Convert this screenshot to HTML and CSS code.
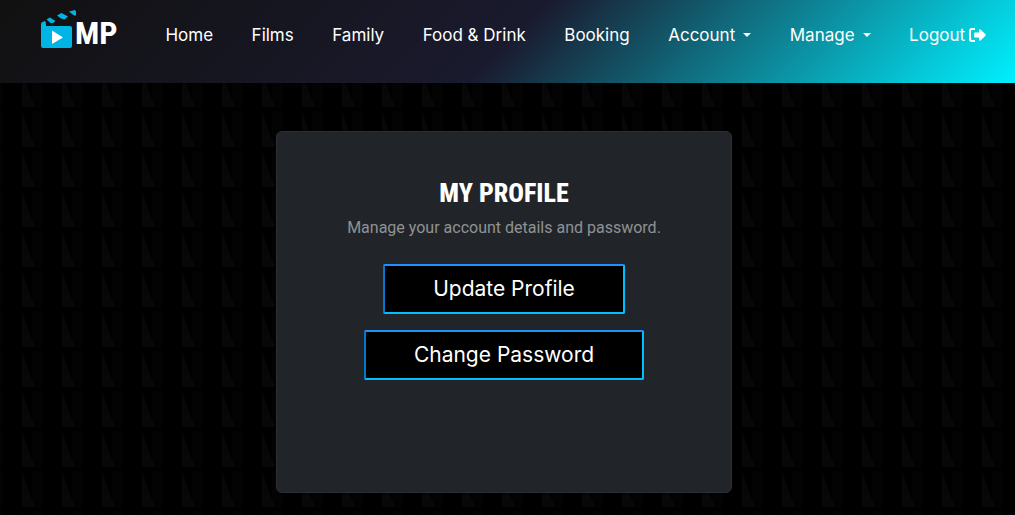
FILE: index.html
```html
<!DOCTYPE html>
<html lang="en">
<head>
<meta charset="utf-8">
<meta name="viewport" content="width=device-width, initial-scale=1">
<title>My Profile</title>
<link rel="stylesheet" href="styles.css">
</head>
<body>
<header class="site-header">
  <a class="brand" href="#" aria-label="MP home">
    <svg class="brand-icon" viewBox="0 0 36 39" aria-hidden="true">
      <path fill="#00b4e6" d="M0 14q0-2 2-2h2q1 0 1 2v2h24q2 0 2 2v18q0 2-2 2H2q-2 0-2-2z"/>
      <path fill="#00b4e6" d="M5.500 9.500L9 7.500L14.500 11L12 13H9.500zM16 5.500L20.500 3L27 6.500L23.500 9.500L20 8.500zM28 1.500L34 0L35 1.500V5.500H33zM1.500 12L4 11L5 13z"/>
      <path fill="#fff" d="M11 20.500L22 27.500L11 34z"/>
    </svg>
    <span class="brand-name">MP</span>
  </a>
  <nav class="main-nav" aria-label="Main">
    <a class="nav-link" href="#">Home</a>
    <a class="nav-link" href="#">Films</a>
    <a class="nav-link" href="#">Family</a>
    <a class="nav-link" href="#">Food &amp; Drink</a>
    <a class="nav-link" href="#">Booking</a>
    <a class="nav-link has-menu" href="#">Account</a>
    <a class="nav-link has-menu" href="#">Manage</a>
    <a class="nav-link logout" href="#">Logout
      <svg class="logout-icon" viewBox="0 0 17 14" aria-hidden="true">
        <path fill="none" stroke="#fff" stroke-width="2" d="M6 1H3Q1 1 1 3v8q0 2 2 2h3"/>
        <path fill="#fff" d="M6 4.500h4V2q.5-1.200 1.500-.5L16.500 6.300q.5.700 0 1.400L11.500 12.500q-1 .700-1.500-.5V9.500H6q-.8 0-.8-.8V5.300Q5.200 4.500 6 4.500z"/>
      </svg>
    </a>
  </nav>
</header>
<main class="page">
  <section class="card">
    <h1 class="card-title">My Profile</h1>
    <p class="card-text">Manage your account details and password.</p>
    <button class="action" type="button">Update Profile</button>
    <button class="action" type="button">Change Password</button>
  </section>
</main>
</body>
</html>
```

FILE: styles.css
```css
* {
  box-sizing: border-box;
}

body {
  margin: 0;
  min-height: 100vh;
  font-family: Roboto, sans-serif;
  color: #fff;
  background:
    linear-gradient(#000 4px, transparent 4px) 0 107px / 40px 40px,
    linear-gradient(90deg, rgba(255, 255, 255, 0.012) 2px, transparent 2px 32px, rgba(255, 255, 255, 0.012) 32px) 0 107px / 40px 40px,
    conic-gradient(from 161deg at 22px 4px, #070707 19deg, transparent 19deg) 0 107px / 40px 40px,
    #000;
}

.site-header {
  display: flex;
  align-items: flex-start;
  gap: 48px;
  min-height: 83px;
  padding: 10px 29px 0 41px;
  background: linear-gradient(135deg, #111, #1a1a2e, #00f0ff);
}

.brand {
  display: flex;
  align-items: flex-end;
  color: #fff;
  text-decoration: none;
}

.brand-icon {
  width: 36px;
  height: 39px;
}

.brand-name {
  margin-left: -2px;
  font: 700 32px/31px "Roboto Condensed", Roboto, sans-serif;
}

.main-nav {
  display: flex;
  flex: 1;
  justify-content: space-between;
  padding-top: 13px;
}

.nav-link {
  font: 17px/24px Inter, sans-serif;
  color: #fff;
  text-decoration: none;
  white-space: nowrap;
}

.has-menu::after {
  content: "";
  display: inline-block;
  margin-left: 8px;
  vertical-align: 4px;
  border: 4px solid transparent;
  border-top-color: #fff;
  border-bottom: 0;
}

.logout-icon {
  width: 17px;
  height: 14px;
  margin-left: -1px;
  vertical-align: -1px;
}

.page {
  padding: 48px 7px 22px 0;
}

.card {
  display: flex;
  flex-direction: column;
  align-items: center;
  width: 100%;
  max-width: 456px;
  min-height: 362px;
  margin: 0 auto;
  padding: 43px 24px;
  border: 1px solid #2b2f34;
  border-radius: 6px;
  background: #212529;
}

.card-title {
  margin: 0 0 6px;
  font: 800 26px/36px "Roboto Condensed", Roboto, sans-serif;
  text-transform: uppercase;
}

.card-text {
  margin: 0 0 25px;
  font-size: 16px;
  line-height: 22px;
  color: #909294;
}

.action {
  height: 50px;
  margin-bottom: 16px;
  padding: 0 48px;
  border: 2px solid;
  border-color: #1e90ff #00bfff #00bfff #0078d0;
  border-radius: 2px;
  font: 21px/30px Inter, sans-serif;
  color: #fff;
  background: #000;
}
```
